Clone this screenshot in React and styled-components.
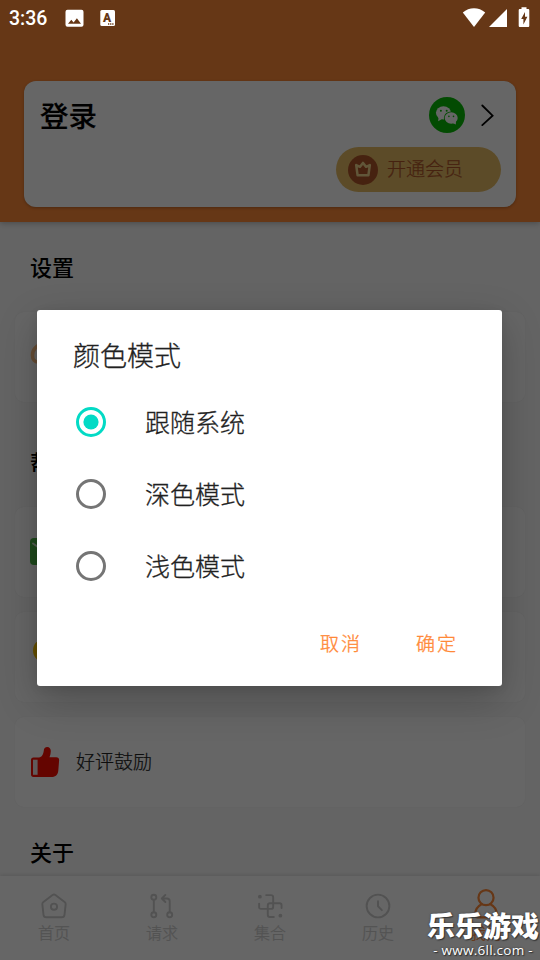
import React, { useState } from 'react';
import styled, { createGlobalStyle } from 'styled-components';

const ORANGE = '#ff8937';

const GlobalStyle = createGlobalStyle`
  * {
    box-sizing: border-box;
  }
  body {
    margin: 0;
    overflow: hidden;
    font-family: "Roboto", "Noto Sans CJK SC", sans-serif;
  }
`;

const Screen = styled.div`
  position: relative;
  display: flex;
  flex-direction: column;
  width: 540px;
  height: 960px;
  overflow: hidden;
  background-color: #fafafa;
`;

const Header = styled.header`
  flex: none;
  height: 222px;
  padding: 81px 24px 15px;
  background-color: ${ORANGE};
  box-shadow: 0 1px 6px rgba(0, 0, 0, 0.28);
  z-index: 1;
`;

const AccountCard = styled.div`
  display: flex;
  justify-content: space-between;
  height: 126px;
  padding: 15px 15px 15px 16px;
  border-radius: 12px;
  background-color: #fff;
  box-shadow: 0 1px 3px rgba(0, 0, 0, 0.25);
`;

const LoginTitle = styled.h1`
  margin: 0;
  font-size: 28.5px;
  line-height: 43px;
  font-weight: 500;
  color: #000;
  -webkit-text-stroke: 0.2px #000;
`;

const AccountActions = styled.div`
  display: flex;
  flex-direction: column;
  justify-content: space-between;
  align-items: flex-end;
`;

const LoginMethods = styled.div`
  display: flex;
  align-items: center;
  gap: 16px;
  height: 38px;
  padding-right: 7px;
`;

const VipButton = styled.button`
  display: flex;
  align-items: center;
  gap: 9px;
  width: 165px;
  height: 45px;
  padding: 0 12px;
  border: none;
  border-radius: 23px;
  background-color: #e6bc64;
  color: #b0562a;
  font-family: inherit;
  font-size: 19px;
  font-weight: 300;
  line-height: 24px;
  -webkit-text-stroke: 0.25px;

  span {
    padding-top: 1px;
  }
`;

const Content = styled.main`
  flex: 1;
  min-height: 0;
  overflow: hidden;
  padding: 0 15px;
`;

const SectionTitle = styled.h2`
  margin: ${props => props.$top}px 0 ${props => props.$bottom}px;
  padding-left: 15px;
  font-size: 22px;
  line-height: 30px;
  font-weight: 500;
  color: #000;
`;

const Item = styled.div`
  display: flex;
  align-items: center;
  gap: 16px;
  height: 90px;
  margin-bottom: 15px;
  padding-left: 15px;
  border-radius: 9px;
  background-color: #fff;
  box-shadow: 0 0 2px rgba(0, 0, 0, 0.06);
  font-size: 19px;
  font-weight: 300;
  color: #222;
  -webkit-text-stroke: 0.2px;

  span {
    padding-bottom: 3px;
  }
`;

const TabBar = styled.nav`
  flex: none;
  display: flex;
  height: 84px;
  background-color: #fff;
  box-shadow: 0 -1px 4px rgba(0, 0, 0, 0.12);
  z-index: 1;
`;

const Tab = styled.div`
  flex: 1;
  display: flex;
  flex-direction: column;
  align-items: center;
  padding-top: ${props => props.$active ? 13 : 17}px;
  color: ${props => props.$active ? ORANGE : '#cdcdcd'};
  font-size: 16px;
  font-weight: 300;
  line-height: 24px;
  -webkit-text-stroke: 0.25px;

  svg {
    display: block;
    margin-bottom: 3px;
  }
`;

const Scrim = styled.div`
  position: absolute;
  inset: 0;
  z-index: 2;
  display: flex;
  justify-content: center;
  align-items: flex-start;
  padding: 310px 38px 0 37px;
  background-color: rgba(0, 0, 0, 0.6);
`;

const Dialog = styled.div`
  width: 465px;
  height: 376px;
  padding-top: 27px;
  border-radius: 3px;
  background-color: #fff;
  box-shadow: 0 14px 40px rgba(0, 0, 0, 0.24), 0 2px 10px rgba(0, 0, 0, 0.08);
`;

const DialogTitle = styled.h3`
  margin: 0 0 8px;
  padding-left: 36px;
  font-size: 27px;
  line-height: 41px;
  font-weight: 300;
  color: #212121;
  -webkit-text-stroke: 0.3px;
`;

const Option = styled.div`
  display: flex;
  align-items: center;
  gap: 39px;
  height: 72px;
  padding-left: 39px;
  font-size: 25px;
  font-weight: 300;
  color: #212121;
  -webkit-text-stroke: 0.3px;

  span {
    padding-bottom: 2px;
  }
`;

const DialogActions = styled.div`
  display: flex;
  justify-content: flex-end;
  gap: 12px;
  padding: 13px 24px 0 0;
`;

const TextButton = styled.button`
  width: 84px;
  height: 54px;
  padding: 0 0 0 2px;
  border: none;
  background: none;
  color: ${ORANGE};
  font-family: inherit;
  font-size: 19px;
  font-weight: 300;
  letter-spacing: 2px;
  -webkit-text-stroke: 0.35px;
`;

const StatusBar = styled.div`
  position: absolute;
  top: 0;
  left: 0;
  z-index: 3;
  display: flex;
  justify-content: space-between;
  align-items: center;
  width: 100%;
  height: 36px;
  padding: 0 9px;
  color: #fff;
`;

const StatusGroup = styled.div`
  display: flex;
  align-items: center;
`;

const Clock = styled.span`
  width: 56px;
  padding-top: 1px;
  font-size: 19.5px;
  font-weight: 500;
`;

const Watermark = styled.div`
  position: absolute;
  right: 1px;
  bottom: 2px;
  z-index: 4;
  width: 112px;
  color: #fff;
  text-align: center;
  white-space: nowrap;
  text-shadow: 0 0 2px #333, 1px 1px 1px #333;
`;

const WatermarkName = styled.div`
  font-size: 28px;
  line-height: 25px;
  padding-bottom: 3px;
  font-weight: 900;
`;

const WatermarkUrl = styled.div`
  font-family: "Open Sans", sans-serif;
  font-size: 13.5px;
  line-height: 15px;
  letter-spacing: 0.25px;
`;

const Radio = ({ checked }) => (
  <svg width="30" height="30" viewBox="0 0 30 30">
    <circle cx="15" cy="15" r="13.5" fill="none" stroke={checked ? '#03dac5' : '#757575'} strokeWidth="3" />
    {checked && <circle cx="15" cy="15" r="7.6" fill="#03dac5" />}
  </svg>
);

const WechatIcon = () => (
  <svg width="36" height="36" viewBox="0 0 36 36">
    <circle cx="18" cy="18" r="18" fill="#09bb07" />
    <ellipse cx="14.5" cy="15.8" rx="7.6" ry="6.6" fill="#fff" />
    <path d="M9.5 20 9.2 24.2 13 22z" fill="#fff" />
    <ellipse cx="22.2" cy="21" rx="7.4" ry="6.6" fill="#09bb07" />
    <ellipse cx="22.2" cy="21" rx="6.5" ry="5.7" fill="#fff" />
    <path d="M27 24 26.8 27.5 23.5 26z" fill="#fff" />
    <g fill="#09bb07">
      <circle cx="11.9" cy="13.7" r="1" />
      <circle cx="17.7" cy="13.7" r="1" />
      <circle cx="19.9" cy="19.4" r=".8" />
      <circle cx="24.5" cy="19.4" r=".8" />
    </g>
  </svg>
);

const ChevronIcon = () => (
  <svg width="13" height="22" viewBox="0 0 13 22" fill="none" stroke="#000" strokeWidth="1.8" strokeLinecap="round">
    <path d="M1.3 1.5 11.6 11.7 1.3 21.1" />
  </svg>
);

const CrownIcon = () => (
  <svg width="30" height="30" viewBox="0 0 30 30">
    <circle cx="15" cy="15" r="15" fill="#b0562a" />
    <path
      d="M8.2 10.1 12 11.800 15 7.900l3 3.900 3.800-1.700-1.400 10.200H9.600z"
      fill="none"
      stroke="#f3d88f"
      strokeWidth="2.5"
      strokeLinejoin="round"
    />
  </svg>
);

const PaletteIcon = () => (
  <svg width="30" height="34" viewBox="0 0 30 34">
    <path d="M14 3C7 5 2.500 9 2.500 15.500c0 4 2.500 6.500 5.500 6.500s5-2 5-5-2-4.500-4.500-4.500" fill="none" stroke="#ffc184" strokeWidth="3.600" />
  </svg>
);

const MailIcon = () => (
  <svg width="30" height="30" viewBox="0 0 30 30">
    <rect x="0" y="1" width="30" height="27" rx="4" fill="#4fb849" />
    <path d="M3 6.500 15 15l12-8.500" fill="none" stroke="#d5ecd3" strokeWidth="2" strokeLinecap="round" />
  </svg>
);

const CoinIcon = () => (
  <svg width="30" height="30" viewBox="0 0 30 30">
    <circle cx="15" cy="8.500" r="12" fill="#ffc800" />
  </svg>
);

const ThumbIcon = () => (
  <svg width="30" height="32" viewBox="0 0 30 32">
    <path d="M9 11.600c2.800-.2 4.500-3.800 4.800-7.100.1-2 1.400-3.500 3.400-3.500 2.300 0 3.600 1.700 3.600 4 0 2.200-.5 4.300-1.300 6.300h6.700c2.300 0 3.100 1.400 2.900 3.300l-.8 10c-.3 3.700-2.100 6.300-5.700 6.300H3.500C1.800 30.900 1 30 1 28.500V14c0-1.500.8-2.400 2.500-2.400z" fill="#f90e00" />
    <path d="M3 13.700H7.600V28.800H3z" fill="#f0e4e4" />
  </svg>
);

const TabIcon = ({ children, size = 26 }) => (
  <svg
    width={size}
    height={size}
    viewBox="0.5 0.5 27 27"
    fill="none"
    stroke="currentColor"
    strokeWidth="2"
    strokeLinecap="round"
    strokeLinejoin="round"
  >
    {children}
  </svg>
);

const tabs = [
  {
    label: '首页',
    icon: (
      <>
        <path d="M12.500 2.600a2.600 2.600 0 0 1 3 0L25 9.800c.9.700 1.200 1.500 1.100 2.500l-1.200 10.900c-.2 1.600-1.200 2.500-2.800 2.500H5.900c-1.600 0-2.600-.9-2.800-2.500L1.900 12.300c-.1-1 .2-1.800 1.100-2.500z" />
        <circle cx="14" cy="14.700" r="3.200" />
      </>
    ),
  },
  {
    label: '请求',
    icon: (
      <>
        <circle cx="5.500" cy="5" r="2.600" />
        <circle cx="5.500" cy="23" r="2.600" />
        <circle cx="22" cy="23" r="2.600" />
        <path d="M5.500 7.600v12.800M22 20.400V9c0-1.800-1-2.800-2.800-2.800H14M17.500 2.500 13.800 6.200l3.700 3.700" />
      </>
    ),
  },
  {
    label: '集合',
    icon: (
      <>
        <path d="M10 2.700h5c1.500 0 2.300.8 2.300 2.300v9.700c0 1.500-.8 2.300-2.300 2.300H4.700c-1.300 0-2-.7-2-2v-3.500M18 25.500h-4c-1.500 0-2.300-.8-2.300-2.300v-9.700c0-1.500.8-2.300 2.300-2.300h10c1.300 0 2 .7 2 2V16" />
        <circle cx="3.500" cy="4.300" r="1" fill="currentColor" />
        <circle cx="24.800" cy="24" r="1" fill="currentColor" />
      </>
    ),
  },
  {
    label: '历史',
    icon: (
      <>
        <circle cx="14" cy="14" r="11.800" />
        <path d="M14 9v5.300l4 4" />
      </>
    ),
  },
  {
    label: '我的',
    active: true,
    icon: (
      <>
        <circle cx="14" cy="8.300" r="6.800" />
        <path d="M10 14.200C6.300 16 4.200 19.500 4.200 24c0 1.300.7 2 2 2h15.600c1.300 0 2-.7 2-2 0-4.500-2.100-8-5.800-9.800" />
      </>
    ),
  },
];

const modes = ['跟随系统', '深色模式', '浅色模式'];

const App = () => {
  const [mode, setMode] = useState(modes[0]);

  return (
    <Screen>
      <GlobalStyle />

      <Header>
        <AccountCard>
          <LoginTitle>登录</LoginTitle>
          <AccountActions>
            <LoginMethods>
              <WechatIcon />
              <ChevronIcon />
            </LoginMethods>
            <VipButton>
              <CrownIcon />
              <span>开通会员</span>
            </VipButton>
          </AccountActions>
        </AccountCard>
      </Header>

      <Content>
        <SectionTitle $top={32} $bottom={28}>设置</SectionTitle>
        <Item><PaletteIcon /></Item>
        <SectionTitle $top={47} $bottom={28}>帮助</SectionTitle>
        <Item><MailIcon /></Item>
        <Item><CoinIcon /></Item>
        <Item>
          <ThumbIcon />
          <span>好评鼓励</span>
        </Item>
        <SectionTitle $top={32} $bottom={28}>关于</SectionTitle>
      </Content>

      <TabBar>
        {tabs.map(tab => (
          <Tab key={tab.label} $active={tab.active}>
            <TabIcon size={tab.active ? 30 : 26}>{tab.icon}</TabIcon>
            {tab.label}
          </Tab>
        ))}
      </TabBar>

      <Scrim>
        <Dialog>
          <DialogTitle>颜色模式</DialogTitle>
          {modes.map(name => (
            <Option key={name} onClick={() => setMode(name)}>
              <Radio checked={name === mode} />
              <span>{name}</span>
            </Option>
          ))}
          <DialogActions>
            <TextButton>取消</TextButton>
            <TextButton>确定</TextButton>
          </DialogActions>
        </Dialog>
      </Scrim>

      <StatusBar>
        <StatusGroup>
          <Clock>3:36</Clock>
          <svg width="50" height="20" viewBox="0 0 50 20">
            <path fillRule="evenodd" d="M2.500 1.800h14a2 2 0 0 1 2 2v13a2 2 0 0 1-2 2h-14a2 2 0 0 1-2-2v-13a2 2 0 0 1 2-2zM3 15.800h13l-4.100-5.500-3.300 4.200-2.300-2.700z" fill="#fff" />
            <rect x="35.300" y="2" width="14.700" height="16" rx="1.500" fill="#fff" />
            <text x="42" y="13.500" textAnchor="middle" fontFamily="Roboto, sans-serif" fontSize="12" fontWeight="900" fill="#663716">A</text>
            <path d="M43 16h6" stroke="#663716" strokeWidth="1.500" strokeDasharray="1.300 .8" />
          </svg>
        </StatusGroup>
        <svg width="69" height="24" viewBox="0 0 69 24" fill="#fff">
          <path d="M.8 6.500C7 .8 17 .8 23.200 6.500L12 21z" />
          <path d="M45 3v18H27z" />
          <path fillRule="evenodd" d="M59.500 3V1.200h5V3h1.500c.8 0 1.300.5 1.300 1.300v15.400c0 .8-.5 1.300-1.300 1.300h-8c-.8 0-1.300-.5-1.300-1.300V4.300c0-.8.5-1.300 1.300-1.300zM63 6l-3.800 7h2.200V18.500l4-7.800h-2.400z" />
        </svg>
      </StatusBar>

      <Watermark>
        <WatermarkName>乐乐游戏</WatermarkName>
        <WatermarkUrl>- www.6ll.com -</WatermarkUrl>
      </Watermark>
    </Screen>
  );
};

export default App;
